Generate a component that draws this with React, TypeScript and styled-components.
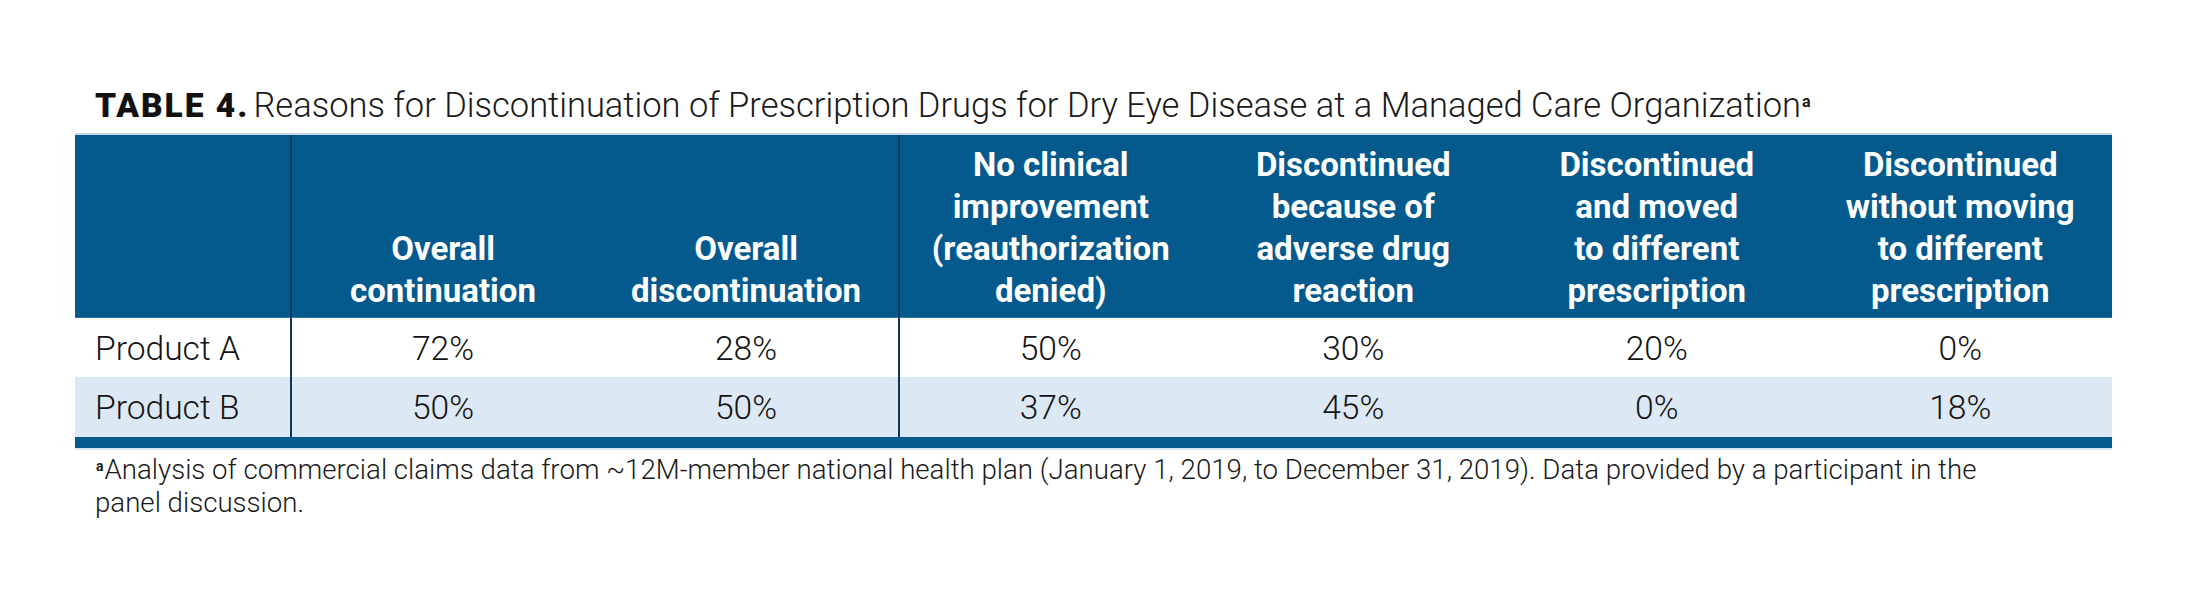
import React from "react";
import styled, { createGlobalStyle } from "styled-components";

const Global = createGlobalStyle`
  html, body { margin: 0; padding: 0; background: #ffffff; }
  body { font-family: Roboto, "Liberation Sans", Arial, sans-serif; color: #1c1c1c; }
`;

const BLUE = "#045a8d";
const NAVY = "#0d375a";
const TINT = "#dce8f4";

const Page = styled.div`
  width: 2187px;
  height: 605px;
  box-sizing: border-box;
  padding: 86px 75px 0 75px;
`;

const Title = styled.h1`
  margin: 0 0 8px 0;
  padding-left: 20px;
  font-size: 34.5px;
  line-height: 39px;
  font-weight: 300;
  white-space: nowrap;
  color: #1a1a1a;
`;

const Label = styled.span`
  font-weight: 900;
  font-size: 33.5px;
  letter-spacing: 2px;
  margin-right: 4px;
  color: #111;
`;

const Sup = styled.sup<{ $size: number; $raise: number }>`
  font-size: ${(p) => p.$size}px;
  font-weight: 700;
  line-height: 0;
  vertical-align: ${(p) => p.$raise}px;
  margin-left: 1px;
  margin-right: 1px;
`;

const Grid = styled.div`
  display: grid;
  grid-template-columns: 215px 304px 304px repeat(4, 303.5px);
  grid-template-rows: 183px 59px 60px;
  border-top: 2px solid #c4d8e8;
  border-bottom: 11px solid ${BLUE};
  box-shadow: 0 2px 0 #d6e7f1;
`;

const HeadCell = styled.div<{ $divider?: boolean }>`
  background: ${BLUE};
  color: #ffffff;
  font-weight: 700;
  font-size: 33px;
  line-height: 42px;
  text-align: center;
  display: flex;
  flex-direction: column;
  justify-content: flex-end;
  padding: 0 4px 5px;
  box-sizing: border-box;
  border-bottom: 1px solid #2f73a3;
  border-left: ${(p) => (p.$divider ? `2px solid ${NAVY}` : "none")};
`;

const BodyCell = styled.div<{ $alt?: boolean; $divider?: boolean; $label?: boolean }>`
  background: ${(p) => (p.$alt ? TINT : "#ffffff")};
  font-size: 33.6px;
  line-height: 1;
  font-weight: 300;
  display: flex;
  align-items: center;
  justify-content: ${(p) => (p.$label ? "flex-start" : "center")};
  padding-left: ${(p) => (p.$label ? "20px" : "0")};
  padding-top: 2px;
  box-sizing: border-box;
  border-left: ${(p) => (p.$divider ? `2px solid ${NAVY}` : "none")};
  color: #141414;
`;

const Footnote = styled.p`
  margin: 5px 0 0 0;
  padding-left: 20px;
  font-size: 27.65px;
  line-height: 33px;
  font-weight: 300;
  color: #1a1a1a;
`;

const headers: string[][] = [
  [],
  ["Overall", "continuation"],
  ["Overall", "discontinuation"],
  ["No clinical", "improvement", "(reauthorization", "denied)"],
  ["Discontinued", "because of", "adverse drug", "reaction"],
  ["Discontinued", "and moved", "to different", "prescription"],
  ["Discontinued", "without moving", "to different", "prescription"],
];

const rows: { name: string; values: string[] }[] = [
  { name: "Product A", values: ["72%", "28%", "50%", "30%", "20%", "0%"] },
  { name: "Product B", values: ["50%", "50%", "37%", "45%", "0%", "18%"] },
];

const dividerCols = new Set([1, 3]);

export default function App() {
  return (
    <Page>
      <Global />
      <Title>
        <Label>TABLE 4.</Label>Reasons for Discontinuation of Prescription Drugs for Dry Eye Disease at a
        Managed Care Organization<Sup $size={16} $raise={10}>a</Sup>
      </Title>
      <Grid>
        {headers.map((lines, i) => (
          <HeadCell key={`h${i}`} $divider={dividerCols.has(i)}>
            {lines.map((l) => (
              <span key={l}>{l}</span>
            ))}
          </HeadCell>
        ))}
        {rows.map((r, ri) => (
          <React.Fragment key={r.name}>
            <BodyCell $alt={ri === 1} $label>
              {r.name}
            </BodyCell>
            {r.values.map((v, vi) => (
              <BodyCell key={vi} $alt={ri === 1} $divider={dividerCols.has(vi + 1)}>
                {v}
              </BodyCell>
            ))}
          </React.Fragment>
        ))}
      </Grid>
      <Footnote>
        <Sup $size={14} $raise={8}>a</Sup>Analysis of commercial claims data from ~12M-member national health plan
        (January 1, 2019, to December 31, 2019). Data provided by a participant in the
        <br />
        panel discussion.
      </Footnote>
    </Page>
  );
}
